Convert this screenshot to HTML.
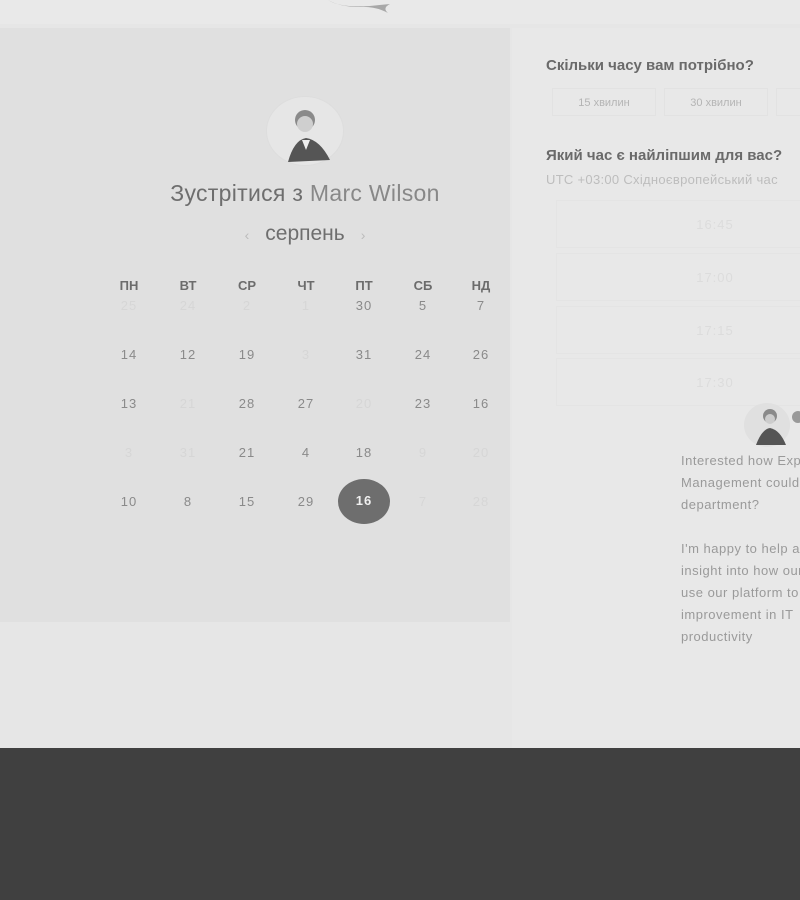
<!DOCTYPE html>
<html><head><meta charset="utf-8"><style>
*{margin:0;padding:0;box-sizing:border-box}
html,body{width:800px;height:900px;overflow:hidden}
body{background:#e6e6e6;font-family:"Liberation Sans",sans-serif;position:relative}
#w{position:absolute;left:0;top:0;width:800px;height:900px;overflow:hidden}
.a{position:absolute}
.left{left:0;top:28px;width:510px;height:594px;background:#e0e0e0}
.right{left:512px;top:28px;width:288px;height:720px;background:#e8e8e8}
.footer{left:0;top:748px;width:800px;height:152px;background:#404040}
.c{position:absolute;transform:translateX(-50%);text-align:center;white-space:nowrap}
.d{font-size:13px;color:#8a8a8a;letter-spacing:1px}
.f{color:#d6d6d6}
.h{font-size:13px;font-weight:bold;color:#6c6c6c}
.slot{position:absolute;left:556px;width:318px;height:48px;border:1px solid #e4e4e4;font-size:13px;color:#dcdcdc;letter-spacing:1px;text-align:center;line-height:48px}
.txt{font-size:13px;color:#9a9a9a;line-height:22px;letter-spacing:.5px;white-space:nowrap}
</style></head><body><div id="w">
<div class="a" style="left:0;top:0;width:800px;height:24px;background:#e9e9e9"></div>
<svg class="a" style="left:320px;top:0" width="80" height="14"><path d="M8 0 Q20 8 50 6 L70 4 Q62 8 68 13 Q55 6 40 7 Q20 7 8 0Z" fill="#a8a8a8"/></svg>
<div class="a left"></div>
<div class="a right"></div>
<div class="a footer"></div>

<div class="a" style="left:266px;top:96px;width:78px;height:70px;border-radius:50%;background:#e6e6e6;border:1px solid #ddd"></div>
<svg class="a" style="left:282px;top:102px" width="56" height="62"><circle cx="23" cy="18" r="10" fill="#8a8a8a"/><circle cx="23" cy="22" r="8" fill="#cfcfcf"/><path d="M6 60 Q12 38 24 36 Q38 38 48 58 Z" fill="#555"/><path d="M20 38 L24 48 L28 38Z" fill="#eee"/></svg>
<div class="c" style="left:305px;top:180px;font-size:23px;color:#6e6e6e;letter-spacing:.3px">Зустрітися з <span style="color:#888">Marc Wilson</span></div>
<div class="c" style="left:305px;top:222px;font-size:21px;color:#6e6e6e"><span style="color:#bbb;font-size:14px;margin-right:16px">‹</span>серпень<span style="color:#bbb;font-size:14px;margin-left:16px">›</span></div>

<div class="c h" style="left:129px;top:278px">ПН</div><div class="c h" style="left:188px;top:278px">ВТ</div><div class="c h" style="left:247px;top:278px">СР</div><div class="c h" style="left:306px;top:278px">ЧТ</div><div class="c h" style="left:364px;top:278px">ПТ</div><div class="c h" style="left:423px;top:278px">СБ</div><div class="c h" style="left:481px;top:278px">НД</div>

<div class="c d f" style="left:129px;top:298px">25</div><div class="c d f" style="left:188px;top:298px">24</div><div class="c d f" style="left:247px;top:298px">2</div><div class="c d f" style="left:306px;top:298px">1</div><div class="c d" style="left:364px;top:298px">30</div><div class="c d" style="left:423px;top:298px">5</div><div class="c d" style="left:481px;top:298px">7</div>
<div class="c d" style="left:129px;top:347px">14</div><div class="c d" style="left:188px;top:347px">12</div><div class="c d" style="left:247px;top:347px">19</div><div class="c d f" style="left:306px;top:347px">3</div><div class="c d" style="left:364px;top:347px">31</div><div class="c d" style="left:423px;top:347px">24</div><div class="c d" style="left:481px;top:347px">26</div>
<div class="c d" style="left:129px;top:396px">13</div><div class="c d f" style="left:188px;top:396px">21</div><div class="c d" style="left:247px;top:396px">28</div><div class="c d" style="left:306px;top:396px">27</div><div class="c d f" style="left:364px;top:396px">20</div><div class="c d" style="left:423px;top:396px">23</div><div class="c d" style="left:481px;top:396px">16</div>
<div class="c d f" style="left:129px;top:445px">3</div><div class="c d f" style="left:188px;top:445px">31</div><div class="c d" style="left:247px;top:445px">21</div><div class="c d" style="left:306px;top:445px">4</div><div class="c d" style="left:364px;top:445px">18</div><div class="c d f" style="left:423px;top:445px">9</div><div class="c d f" style="left:481px;top:445px">20</div>
<div class="a" style="left:338px;top:479px;width:52px;height:45px;border-radius:50%;background:#6e6e6e"></div>
<div class="c d" style="left:129px;top:494px">10</div><div class="c d" style="left:188px;top:494px">8</div><div class="c d" style="left:247px;top:494px">15</div><div class="c d" style="left:306px;top:494px">29</div><div class="c d" style="left:364px;top:493px;color:#f0f0f0;font-weight:bold">16</div><div class="c d f" style="left:423px;top:494px">7</div><div class="c d f" style="left:481px;top:494px">28</div>

<div class="a h" style="left:546px;top:57px;font-size:15px;color:#6a6a6a;white-space:nowrap">Скільки часу вам потрібно?</div>
<div class="a" style="left:552px;top:88px;width:104px;height:28px;border:1px solid #e2e2e2;font-size:11px;color:#b4b4b4;text-align:center;line-height:28px">15 хвилин</div>
<div class="a" style="left:664px;top:88px;width:104px;height:28px;border:1px solid #e2e2e2;font-size:11px;color:#b4b4b4;text-align:center;line-height:28px">30 хвилин</div>
<div class="a" style="left:776px;top:88px;width:24px;height:28px;border:1px solid #e2e2e2;border-right:none"></div>
<div class="a h" style="left:546px;top:147px;font-size:15px;color:#6a6a6a;white-space:nowrap">Який час є найліпшим для вас?</div>
<div class="a" style="left:546px;top:172px;font-size:13px;color:#bdbdbd;white-space:nowrap;letter-spacing:.3px">UTC +03:00 Східноєвропейський час</div>
<div class="slot" style="top:200px">16:45</div>
<div class="slot" style="top:253px">17:00</div>
<div class="slot" style="top:306px">17:15</div>
<div class="slot" style="top:358px">17:30</div>
<div class="a" style="left:744px;top:403px;width:46px;height:44px;border-radius:50%;background:#e0e0e0"></div>
<svg class="a" style="left:752px;top:405px" width="48" height="42"><circle cx="18" cy="11" r="7" fill="#8a8a8a"/><circle cx="18" cy="14" r="5" fill="#ccc"/><path d="M4 40 Q10 24 18 23 Q28 25 34 40Z" fill="#555"/><circle cx="46" cy="12" r="6" fill="#999"/></svg>
<div class="a txt" style="left:681px;top:450px;width:119px;overflow:hidden">Interested how Expert<br>Management could help<br>department?<br><br>I'm happy to help and<br>insight into how our<br>use our platform to<br>improvement in IT<br>productivity</div>
</div></body></html>
